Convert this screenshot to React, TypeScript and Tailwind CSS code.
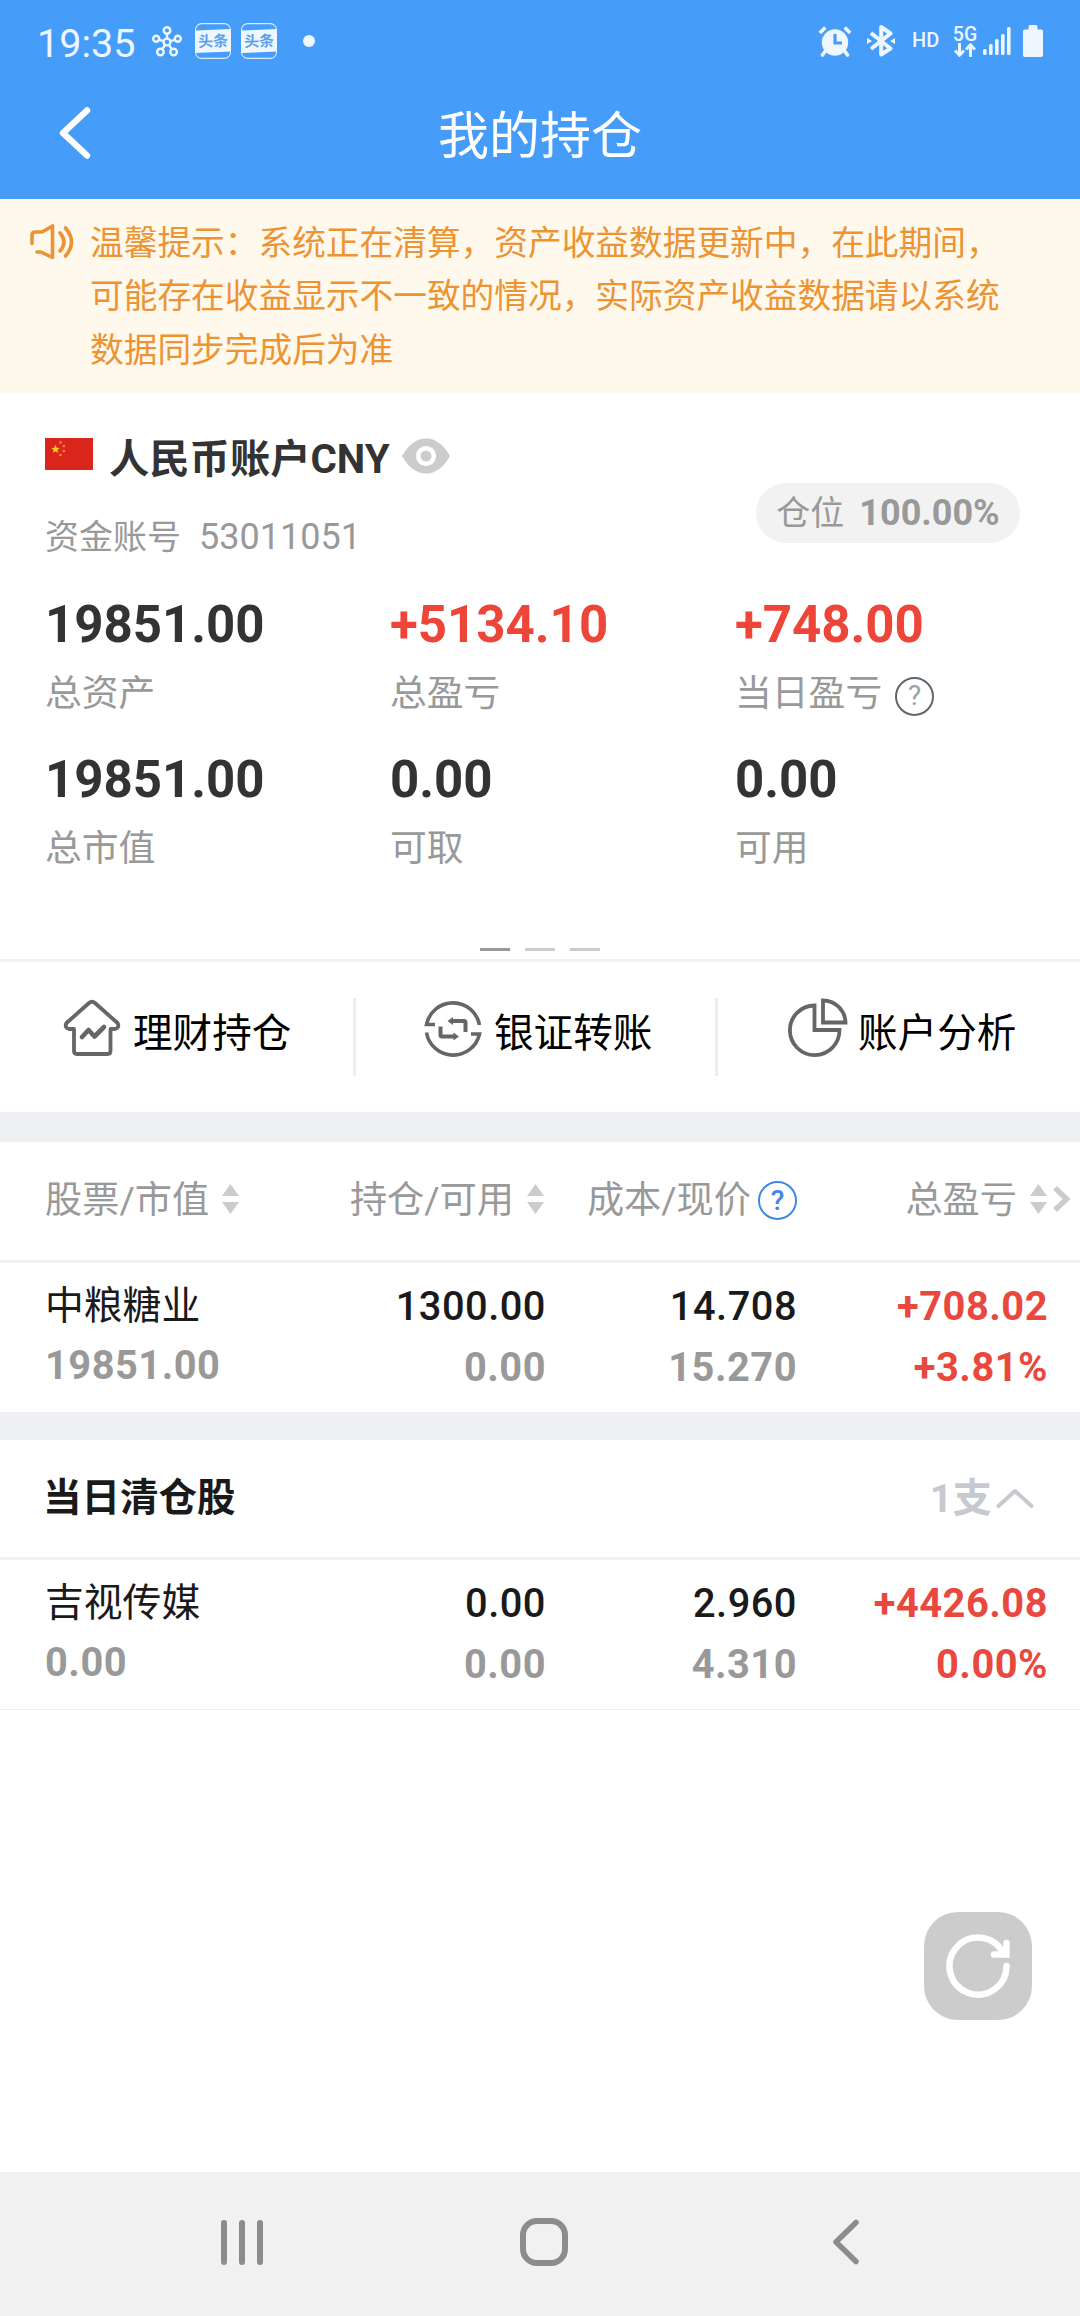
import type { ReactNode } from "react";

const stats = [
  { value: "19851.00", label: "总资产" },
  { value: "+5134.10", label: "总盈亏", up: true },
  { value: "+748.00", label: "当日盈亏", up: true, help: true },
  { value: "19851.00", label: "总市值" },
  { value: "0.00", label: "可取" },
  { value: "0.00", label: "可用" },
];

const holding = {
  name: "中粮糖业",
  marketValue: "19851.00",
  amount: "1300.00",
  available: "0.00",
  cost: "14.708",
  price: "15.270",
  profit: "+708.02",
  rate: "+3.81%",
};

const cleared = {
  name: "吉视传媒",
  marketValue: "0.00",
  amount: "0.00",
  available: "0.00",
  cost: "2.960",
  price: "4.310",
  profit: "+4426.08",
  rate: "0.00%",
};

function NewsIcon() {
  return (
    <svg width="36" height="36" viewBox="0 0 36 36">
      <rect x="0.6" y="0.6" width="34.8" height="34.8" rx="6" fill="none" stroke="#d8ecff" strokeWidth="1.1" />
      <path d="M0 7.5L36 6v22.5L0 30z" fill="#eef7ff" />
      <text
        x="18"
        y="23.6"
        textAnchor="middle"
        fontSize="15"
        fontWeight="700"
        fill="#5c9fe8"
        transform="rotate(-2 18 18)"
      >
        头条
      </text>
    </svg>
  );
}

function StatusBar() {
  return (
    <div className="flex h-[74px] items-center pt-2 pl-[37px] text-[#eef7ff]">
      <span className="mt-[6px] w-[115px] text-[39.5px] leading-none">19:35</span>
      <svg width="30" height="31" viewBox="0 0 30 31" fill="none" stroke="currentColor" strokeWidth="2.4">
        <circle cx="15" cy="16" r="3.4" />
        <circle cx="15" cy="4.5" r="3.3" />
        <circle cx="4.2" cy="12.8" r="3" />
        <circle cx="25.8" cy="12.8" r="3" />
        <circle cx="8.4" cy="26" r="3.3" />
        <circle cx="21.6" cy="26" r="3.3" />
        <path d="M15 7.8v4.8M7.2 13.8l4.6 1.3M22.8 13.8l-4.6 1.3M10.3 23.2l2.7-4.4M19.7 23.2l-2.7-4.4" />
      </svg>
      <div className="ml-[13px] flex gap-[10px]">
        <NewsIcon />
        <NewsIcon />
      </div>
      <span className="ml-[26px] size-3 rounded-full bg-[#eef7ff]" />

      <div className="ml-auto flex items-center pr-[37px]">
        {/* Alarm */}
        <svg width="34" height="32" viewBox="0 0 34 32" fill="none">
          <circle cx="17" cy="17.5" r="13.2" fill="currentColor" />
          <path d="M7 26.5l-2.500 3.500M27 26.5l2.500 3.500" stroke="currentColor" strokeWidth="3.6" strokeLinecap="round" />
          <path d="M1.8 8l5.500-5.600M32.200 8l-5.500-5.600" stroke="currentColor" strokeWidth="3.6" />
          <path d="M17 9v9h7" stroke="#459cf9" strokeWidth="3.2" />
        </svg>
        {/* Bluetooth */}
        <svg className="ml-[15px]" width="28" height="32" viewBox="0 0 28 32" fill="none">
          <path
            d="M4 8l19.500 15.500-9.300 6V2l9.300 6.500L4 24"
            stroke="currentColor"
            strokeWidth="4"
            strokeLinejoin="round"
          />
          <path d="M0 13l5 3-5 3zM28 13l-5 3 5 3z" fill="currentColor" />
        </svg>
        <span className="-mt-[2px] ml-[17px] w-[29px] text-[20px] leading-none font-medium">HD</span>
        <div className="ml-[12px] flex w-[24px] flex-col items-center">
          <span className="text-[19.5px] leading-[17px] font-medium">5G</span>
          <svg width="22" height="14" viewBox="0 0 22 14" fill="none" stroke="currentColor" strokeWidth="3">
            <path d="M5.5 0v12M1 7.5l4.5 4.7L10 7.5M16.5 14V2M12 6.5l4.5-4.7L21 6.5" />
          </svg>
        </div>
        <svg className="ml-[6px]" width="28" height="30" viewBox="0 0 28 30" fill="currentColor">
          <rect x="0" y="23" width="3.6" height="6" rx="1.5" />
          <rect x="6" y="18" width="3.6" height="11" rx="1.5" />
          <rect x="12" y="13" width="3.6" height="16" rx="1.5" />
          <rect x="18" y="8" width="3.6" height="21" rx="1.5" />
          <rect x="24" y="1" width="3.6" height="28" rx="1.5" />
        </svg>
        <svg className="ml-[12px]" width="20" height="32" viewBox="0 0 20 32" fill="currentColor">
          <path d="M5.500 1.500Q5.500 0 7 0h6q1.500 0 1.500 1.500V4.500h4q1.500 0 1.500 1.500V30q0 2-2 2H2q-2 0-2-2V6q0-1.500 1.500-1.500h4z" />
        </svg>
      </div>
    </div>
  );
}

function Header() {
  return (
    <header className="h-[199px] bg-[#459cf9]">
      <StatusBar />
      <div className="grid h-[125px] grid-cols-[200px_1fr_200px] items-center text-white">
        <svg
          className="-mt-[7px] ml-[57px]"
          width="34"
          height="54"
          viewBox="0 0 34 54"
          fill="none"
          stroke="currentColor"
          strokeWidth="6.400"
          strokeLinecap="round"
          strokeLinejoin="round"
        >
          <path d="M30 4.500L6 27 30 49.500" />
        </svg>
        <h1 className="text-center text-[51px] leading-none">我的持仓</h1>
      </div>
    </header>
  );
}

function Notice() {
  return (
    <div className="flex h-[194px] bg-[#fff8ec] pt-[18px] pl-[29px] text-[#ec9433]">
      <svg
        className="mt-[6px] shrink-0"
        width="46"
        height="38"
        viewBox="0 0 46 38"
        fill="none"
        stroke="currentColor"
        strokeWidth="3.600"
        strokeLinecap="round"
        strokeLinejoin="round"
      >
        <path d="M3 20.500V12q0-3 3-3h7L23.500 3v31.500L12 29H8" />
        <path d="M31 10q8 9 0 18M36.500 5q12 14 0 28" />
      </svg>
      <p className="ml-[15px] w-[930px] text-[33.7px] leading-[53.3px]">
        温馨提示：系统正在清算，资产收益数据更新中，在此期间，
        <br />
        可能存在收益显示不一致的情况，实际资产收益数据请以系统
        <br />
        数据同步完成后为准
      </p>
    </div>
  );
}

function Flag() {
  return (
    <svg width="48" height="32" viewBox="0 0 48 32">
      <rect width="48" height="32" fill="#d9251c" />
      <path
        d="M10.500 6.800l1.100 3 3.200.100-2.500 2 .900 3.100-2.700-1.800-2.700 1.800.900-3.100-2.500-2 3.200-.100z"
        fill="#fbd015"
      />
      <g fill="#e8942a">
        <circle cx="15.500" cy="4.500" r="1.300" />
        <circle cx="18.800" cy="8" r="1.300" />
        <circle cx="18.800" cy="13" r="1.300" />
        <circle cx="15.500" cy="17" r="1.300" />
      </g>
    </svg>
  );
}

function Account() {
  return (
    <section className="px-[45px]">
      <div className="flex justify-between">
        <div className="pt-[35px]">
          <div className="flex h-[60px] items-center">
            <span className="-mt-[8px]">
              <Flag />
            </span>
            <h2 className="mt-[4px] ml-4 text-[40.3px] leading-[60px] font-bold whitespace-nowrap text-[#333]">
              人民币账户CNY
            </h2>
            <svg className="-mt-[4px] ml-[12px]" width="48" height="36" viewBox="0 0 48 36">
              <path d="M0 18Q10 0.500 24 0.500T48 18Q38 35.500 24 35.500T0 18z" fill="#ccc" />
              <circle cx="24" cy="18" r="7.800" fill="none" stroke="#fff" strokeWidth="4.600" />
            </svg>
          </div>
          <div className="mt-[19px] flex h-[60px] items-center text-[#999]">
            <span className="text-[34px]">资金账号</span>
            <span className="ml-[18px] text-[36px]">53011051</span>
          </div>
        </div>
        <div className="mt-[90px] mr-[15px] flex h-[60px] w-[264px] items-center justify-center rounded-full bg-[#f2f2f2] text-[#999]">
          <span className="text-[34px]">仓位</span>
          <span className="ml-[15px] text-[36px] font-bold">100.00%</span>
        </div>
      </div>

      <div className="mt-[28px] grid grid-cols-[345px_345px_300px] gap-y-[31px]">
        {stats.map((item) => (
          <div key={item.label}>
            <div
              className={`text-[51px] leading-[60px] font-bold ${item.up ? "text-[#ee4539]" : "text-[#333]"}`}
            >
              {item.value}
            </div>
            <div className="mt-[14px] flex h-[50px] items-center text-[36.800px] leading-none whitespace-nowrap text-[#999]">
              {item.label}
              {item.help && (
                <span className="mt-[4px] ml-[13px] flex size-[39px] items-center justify-center rounded-full border-2 border-[#60666b] text-[28px] text-[#98a2aa]">
                  ?
                </span>
              )}
            </div>
          </div>
        ))}
      </div>

      <div className="mt-[74px] flex justify-center gap-[15px]">
        <i className="h-[3px] w-[30px] bg-[#999]" />
        <i className="h-[3px] w-[30px] bg-[#ccc]" />
        <i className="h-[3px] w-[30px] bg-[#ccc]" />
      </div>
    </section>
  );
}

function Actions() {
  return (
    <nav className="mt-2 flex h-[153px] border-t-[3px] border-[#f2f2f2] pt-9 text-[39.6px] leading-[60px] text-black">
      <a className="flex h-[78px] w-[356px] border-r-[3px] border-[#ededed] pl-[62px]">
        <svg width="60" height="60" viewBox="0 0 60 60" fill="none" stroke="#666" strokeLinejoin="round">
          <path
            d="M12 31H7q-5-1.500-2.500-6L27 5q3-2.500 6 0L55.500 25q2.500 4.500-2.500 6h-4.500v22q0 3-3 3H15q-3 0-3-3z"
            strokeWidth="3.800"
          />
          <path d="M20 39l6.500-7 6 6.500L42 29" strokeWidth="4.600" strokeLinecap="round" />
        </svg>
        <span className="mt-[6px] ml-[11px]">理财持仓</span>
      </a>
      <a className="flex h-[78px] w-[362px] border-r-[3px] border-[#ededed] pl-[67px]">
        <svg width="60" height="60" viewBox="0 0 60 60" fill="none" stroke="#666">
          <path d="M12 26.500H3.500A27 27 0 0 1 56.500 27" strokeWidth="3.600" />
          <path d="M48 36h8.500A27 27 0 0 1 3.500 34.500" strokeWidth="3.600" />
          <path d="M42.500 34V24.500q0-1.500-1.500-1.500H28" strokeWidth="4" />
          <path d="M17.500 28.500V37q0 1.500 1.500 1.500h13" strokeWidth="4" />
          <path d="M30 19v8l-5.500-4zM30.500 34.500v8l5.500-4z" fill="#666" stroke="none" />
        </svg>
        <span className="mt-[6px] ml-[11px]">银证转账</span>
      </a>
      <a className="flex h-[78px] pl-[70px]">
        <svg width="60" height="60" viewBox="0 0 60 60" fill="none" stroke="#666" strokeWidth="3.800">
          <path d="M26.500 7.500V32h25A24.800 24.800 0 1 1 26.500 7.500z" />
          <path d="M35 2.500V24.500h22.500A22.500 22.500 0 0 0 35 2.500z" />
        </svg>
        <span className="mt-[6px] ml-[10px]">账户分析</span>
      </a>
    </nav>
  );
}

function SortIcon() {
  return (
    <svg className="-mt-[3px] shrink-0" width="17" height="30" viewBox="0 0 17 30" fill="#ccc">
      <path d="M8.500 0L17 12H0zM8.500 30L17 18H0z" />
    </svg>
  );
}

function TableHead() {
  return (
    <div className="grid h-[121px] grid-cols-[201px_298px_253px_250px_1fr] items-center border-b-[3px] border-[#f2f2f2] pl-[45px] text-[37.200px] leading-none text-[#999]">
      <div className="flex items-center gap-[13px] whitespace-nowrap">
        股票/市值
        <SortIcon />
      </div>
      <div className="flex items-center justify-end gap-[13px]">
        持仓/可用
        <SortIcon />
      </div>
      <div className="flex items-center justify-end gap-[7px] whitespace-nowrap">
        成本/现价
        <span className="-mt-px flex size-[39px] items-center justify-center rounded-full border-[2.500px] border-[#3f87e5] text-[28px] font-medium text-[#3f87e5]">
          ?
        </span>
      </div>
      <div className="flex items-center justify-end gap-[13px]">
        总盈亏
        <SortIcon />
      </div>
      <svg className="-mt-[4px] ml-[6px]" width="18" height="26" viewBox="0 0 18 26" fill="none">
        <path d="M2 2l11.500 11L2 24" stroke="#ccc" strokeWidth="5.500" />
      </svg>
    </div>
  );
}

function Cell({ top, bottom, className = "" }: { top: ReactNode; bottom: ReactNode; className?: string }) {
  return (
    <div className={`text-right font-bold ${className}`}>
      <div>{top}</div>
      <div className="mt-[1px]">{bottom}</div>
    </div>
  );
}

function StockRow({ stock }: { stock: typeof holding }) {
  return (
    <div className="grid h-[149px] grid-cols-[201px_300px_251px_251px] pt-[14px] pl-[45px] text-[39.800px] leading-[60px] tracking-[0.5px] text-[#999]">
      <div>
        <div className="-mt-[1px] text-[38.800px] tracking-normal whitespace-nowrap text-[#1a1a1a]">{stock.name}</div>
        <div className="font-bold">{stock.marketValue}</div>
      </div>
      <Cell top={<span className="font-medium text-[#1a1a1a]">{stock.amount}</span>} bottom={stock.available} />
      <Cell top={<span className="font-medium text-[#1a1a1a]">{stock.cost}</span>} bottom={stock.price} />
      <Cell top={stock.profit} bottom={stock.rate} className="text-[#e8483e]" />
    </div>
  );
}

function BottomBar() {
  return (
    <div className="mt-auto flex h-[144px] items-center bg-[#f1f1f1] pb-[4px] pl-[221px]">
      <div className="flex gap-[12px]">
        <i className="h-[45px] w-[6px] rounded-full bg-[#8c8c8c]" />
        <i className="h-[45px] w-[6px] rounded-full bg-[#8c8c8c]" />
        <i className="h-[45px] w-[6px] rounded-full bg-[#8c8c8c]" />
      </div>
      <div className="ml-[257px] size-[48px] rounded-[17px] border-6 border-[#8c8c8c]" />
      <svg
        className="ml-[263px]"
        width="30"
        height="46"
        viewBox="0 0 30 46"
        fill="none"
        stroke="#8c8c8c"
        strokeWidth="5.500"
        strokeLinecap="round"
        strokeLinejoin="round"
      >
        <path d="M25 3.500L5 23l20 19.500" />
      </svg>
    </div>
  );
}

export default function App() {
  return (
    <div className="relative flex h-[2316px] w-[1080px] flex-col overflow-hidden bg-white font-[Roboto,'Noto_Sans_CJK_SC',sans-serif]">
      <Header />
      <Notice />
      <Account />
      <Actions />
      <div className="h-[30px] bg-[#eff0f3]" />

      <TableHead />
      <StockRow stock={holding} />
      <div className="h-[28px] bg-[#eff0f3]" />

      <div className="flex h-[120px] items-center justify-between border-b-[3px] border-[#f2f2f2] pr-[45px] pl-[43px] text-[38.500px] leading-none font-bold text-[#1a1a1a]">
        <h3>当日清仓股</h3>
        <div className="flex items-center text-[39.500px] text-[#c6c9d0]">
          1支
          <svg
            className="ml-[3px]"
            width="40"
            height="24"
            viewBox="0 0 40 24"
            fill="none"
            stroke="currentColor"
            strokeWidth="4"
            strokeLinecap="round"
            strokeLinejoin="round"
          >
            <path d="M3.500 19L20 4l16.500 15" />
          </svg>
        </div>
      </div>
      <StockRow stock={cleared} />
      <div className="h-px bg-[#eef0f0]" />

      {/* Floating refresh button */}
      <button className="absolute top-[1912px] left-[924px] size-[108px] rounded-[34px] bg-[#ccc]">
        <svg
          width="108"
          height="108"
          viewBox="0 0 108 108"
          fill="none"
          stroke="#fff"
          strokeWidth="6.400"
          strokeLinecap="round"
        >
          <path d="M82.500 54A28.500 28.500 0 1 1 78.500 39.500" />
          <path d="M82.500 31v11.500H70" />
        </svg>
      </button>

      <BottomBar />
    </div>
  );
}
